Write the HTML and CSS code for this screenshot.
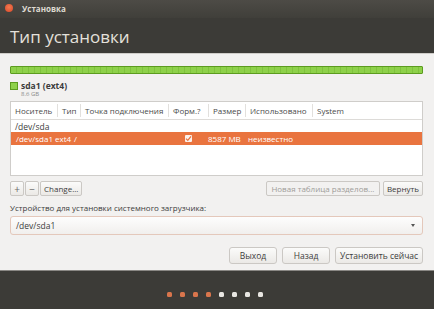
FILE: index.html
```html
<!DOCTYPE html>
<html lang="ru">
<head>
<meta charset="utf-8">
<link rel="stylesheet" href="styles.css">
</head>
<body>
<div class="win">
  <div class="titlebar">
    <span class="close"></span>
    <span class="wtitle">Установка</span>
  </div>
  <div class="header">Тип установки</div>
  <div class="main">
    <div class="diskbar"></div>
    <div class="legend">
      <span class="swatch"></span>
      <div class="legtext">
        <div class="legname">sda1 (ext4)</div>
        <div class="legsize">8.6 GB</div>
      </div>
    </div>
    <div class="table">
      <div class="row head">
        <div class="c c1">Носитель</div>
        <div class="c c2">Тип</div>
        <div class="c c3">Точка подключения</div>
        <div class="c c4">Форм.?</div>
        <div class="c c5">Размер</div>
        <div class="c c6">Использовано</div>
        <div class="c c7">System</div>
      </div>
      <div class="row plain"><div class="c">/dev/sda</div></div>
      <div class="row sel">
        <div class="c s1">/dev/sda1</div>
        <div class="c s2">ext4</div>
        <div class="c s3">/</div>
        <div class="c s4"><span class="chk"><svg width="7" height="7" viewBox="0 0 7 7"><path d="M1 3.6 L2.8 5.4 L6 1.4" fill="none" stroke="#e9743f" stroke-width="1.3"/></svg></span></div>
        <div class="c s5">8587 MB</div>
        <div class="c s6">неизвестно</div>
      </div>
    </div>
    <div class="tools">
      <div class="tgroup">
        <span class="btn sq">+</span><span class="btn sq">−</span><span class="btn">Change...</span>
      </div>
      <div class="tright">
        <span class="btn dis">Новая таблица разделов...</span>
        <span class="btn">Вернуть</span>
      </div>
    </div>
    <div class="label">Устройство для установки системного загрузчика:</div>
    <div class="combo"><span>/dev/sda1</span><span class="arrow"></span></div>
    <div class="actions">
      <span class="btn big">Выход</span>
      <span class="btn big">Назад</span>
      <span class="btn big">Установить сейчас</span>
    </div>
  </div>
  <div class="footer">
    <span class="dot on"></span><span class="dot on"></span><span class="dot on"></span><span class="dot on"></span>
    <span class="dot"></span><span class="dot"></span><span class="dot"></span><span class="dot"></span>
  </div>
</div>
</body>
</html>
```
FILE: styles.css
```css
html, body {
  margin: 0;
  padding: 0;
}
body {
  width: 434px;
  height: 309px;
  overflow: hidden;
  font-family: "Open Sans", "DejaVu Sans", sans-serif;
  font-size: 8px;
  color: #3c3c3c;
}
.win {
  display: flex;
  flex-direction: column;
  height: 309px;
  background: #f2f1f0;
}
.titlebar {
  height: 18px;
  background: linear-gradient(#4d4b46, #403f3a);
  display: flex;
  align-items: center;
  padding-left: 5px;
  gap: 9px;
}
.close {
  width: 8px;
  height: 8px;
  border-radius: 50%;
  background: radial-gradient(circle at 50% 40%, #f47a4f, #d9482a);
  margin-top: -3px;
}
.wtitle {
  color: #dfdbd2;
  font-weight: bold;
  font-size: 8px;
  margin-top: -2px;
}
.header {
  height: 36px;
  background: #3c3b37;
  color: #e4e1db;
  font-size: 17px;
  padding-left: 10px;
  line-height: 38px;
  box-sizing: border-box;
  border-bottom: 1px solid #cfcdc9;
}
.main {
  flex: 1;
  padding: 12px 11px 0 10px;
  display: flex;
  flex-direction: column;
}
.diskbar {
  height: 6px;
  border: 1px solid #5c9c1f;
  background: repeating-linear-gradient(90deg, #8ed14a 0 5px, #80c23e 5px 6px);
  border-radius: 1px;
}
.legend {
  display: flex;
  gap: 3px;
  margin-top: 6px;
  align-items: flex-start;
}
.swatch {
  width: 6px;
  height: 6px;
  background: #8ed14a;
  border: 1px solid #5c9c1f;
  margin-top: 2px;
}
.legname {
  font-weight: bold;
  font-size: 8.5px;
  line-height: 11px;
  color: #3c3c3c;
}
.legsize {
  font-size: 6px;
  color: #8a8a8a;
  line-height: 7px;
}
.table {
  margin-top: 3px;
  height: 75px;
  background: #fff;
  border: 1px solid #cfcdca;
  box-sizing: border-box;
}
.row {
  display: flex;
  align-items: center;
}
.head {
  height: 17px;
  border-bottom: 1px solid #dddbd8;
  color: #4a4a4a;
}
.head .c {
  border-right: 1px solid #e2e0dd;
  padding-left: 4px;
  box-sizing: border-box;
  height: 13px;
  line-height: 13px;
}
.c1 { width: 47px; }
.c2 { width: 23px; }
.c3 { width: 88px; }
.c4 { width: 40px; }
.c5 { width: 37px; }
.c6 { width: 67px; }
.c7 { width: 50px; border-right: none !important; }
.plain {
  height: 12px;
  padding-left: 4px;
  font-size: 8.5px;
}
.sel {
  height: 13px;
  background: #e9743f;
  color: #fff;
  font-size: 8px;
  padding-left: 5px;
}
.s1 { width: 39px; }
.s2 { width: 19px; }
.s3 { width: 111px; }
.s4 { width: 23px; display: flex; align-items: center; }
.s5 { width: 40px; }
.chk {
  width: 7px;
  height: 7px;
  background: #fbf1ec;
  border-radius: 1px;
  display: flex;
}
.tools {
  display: flex;
  justify-content: space-between;
  margin-top: 5px;
  height: 15px;
}
.tgroup, .tright {
  display: flex;
  gap: 1px;
}
.tright { gap: 3px; }
.btn {
  box-sizing: border-box;
  height: 15px;
  border: 1px solid #cbc8c4;
  border-radius: 2px;
  background: linear-gradient(#fbfbfa, #ebe9e6);
  display: inline-flex;
  align-items: center;
  justify-content: center;
  padding: 0 3px;
  font-size: 8px;
  color: #3c3c3c;
}
.sq {
  width: 14px;
  padding: 0;
  font-size: 10px;
  color: #6a6a6a;
}
.dis {
  color: #a09d99;
  background: #f2f1f0;
  width: 114px;
}
.label {
  margin-top: 6px;
  font-size: 8px;
  line-height: 11px;
}
.combo {
  margin-top: 3px;
  height: 19px;
  box-sizing: border-box;
  border: 1px solid #e4c8bb;
  border-radius: 3px;
  background: linear-gradient(#fdfdfd, #f1efed);
  display: flex;
  align-items: center;
  justify-content: space-between;
  padding: 0 7px 0 5px;
  font-size: 8.5px;
}
.arrow {
  width: 0;
  height: 0;
  border-left: 2.5px solid transparent;
  border-right: 2.5px solid transparent;
  border-top: 3px solid #555;
}
.actions {
  display: flex;
  justify-content: flex-end;
  gap: 5px;
  margin-top: 12px;
}
.big {
  height: 17px;
  width: 48px;
  font-size: 8.5px;
  border-radius: 3px;
}
.big:last-child { width: 88px; }
.footer {
  height: 39px;
  background: #3c3b37;
  border-top: 1px solid #8a8884;
  box-sizing: border-box;
  display: flex;
  justify-content: center;
  align-items: center;
  gap: 8px;
  padding-right: 5px;
  padding-top: 8px;
}
.dot {
  width: 5px;
  height: 5px;
  border-radius: 1.5px;
  background: #e8e6e2;
}
.dot.on {
  background: #d9754c;
}
```
